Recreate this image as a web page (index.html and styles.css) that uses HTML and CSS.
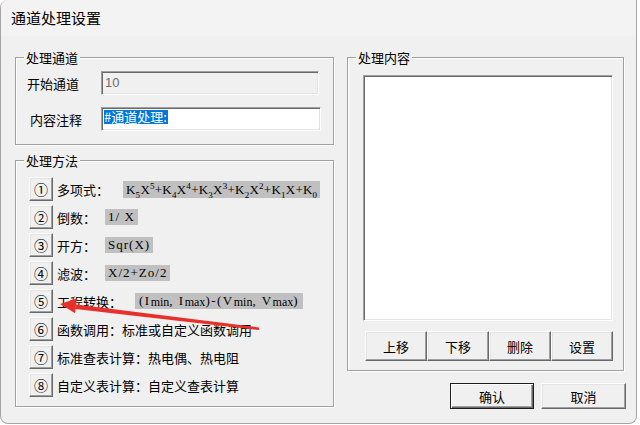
FILE: index.html
```html
<!DOCTYPE html>
<html lang="zh-CN">
<head>
    <meta charset="UTF-8">
    <meta name="viewport" content="width=device-width, initial-scale=1.0">
    <title>通道处理设置</title>
    <link rel="stylesheet" href="styles.css">
</head>
<body>
    <div class="window">
        <div class="titlebar">通道处理设置</div>
        <div class="client">
            <div class="col-left">
                <fieldset class="group group-channel">
                    <legend>处理通道</legend>
                    <div class="fields">
                        <div class="field">
                            <span class="field-label">开始通道</span>
                            <div class="edit edit-disabled">10</div>
                        </div>
                        <div class="field">
                            <span class="field-label field-label-note">内容注释</span>
                            <div class="edit edit-note"><span class="sel">#通道处理:</span></div>
                        </div>
                    </div>
                </fieldset>
                <fieldset class="group group-method">
                    <legend>处理方法</legend>
                    <ul class="methods">
                        <li class="method">
                            <button class="btn btn-num">①</button>
                            <span>多项式：</span>
                            <span class="formula formula-poly">K<sub>5</sub>X<sup>5</sup>+K<sub>4</sub>X<sup>4</sup>+K<sub>3</sub>X<sup>3</sup>+K<sub>2</sub>X<sup>2</sup>+K<sub>1</sub>X+K<sub>0</sub></span>
                        </li>
                        <li class="method">
                            <button class="btn btn-num">②</button>
                            <span>倒数：</span>
                            <span class="formula">1/ X</span>
                        </li>
                        <li class="method">
                            <button class="btn btn-num">③</button>
                            <span>开方：</span>
                            <span class="formula">Sqr(X)</span>
                        </li>
                        <li class="method">
                            <button class="btn btn-num">④</button>
                            <span>滤波：</span>
                            <span class="formula">X/2+Zo/2</span>
                        </li>
                        <li class="method">
                            <button class="btn btn-num">⑤</button>
                            <span>工程转换：</span>
                            <span class="formula formula-range">(I<sub>min</sub>, I<sub>max</sub>)-(V<sub>min</sub>, V<sub>max</sub>)</span>
                        </li>
                        <li class="method">
                            <button class="btn btn-num">⑥</button>
                            <span>函数调用：标准或自定义函数调用</span>
                        </li>
                        <li class="method">
                            <button class="btn btn-num">⑦</button>
                            <span>标准查表计算：热电偶、热电阻</span>
                        </li>
                        <li class="method">
                            <button class="btn btn-num">⑧</button>
                            <span>自定义表计算：自定义查表计算</span>
                        </li>
                    </ul>
                </fieldset>
            </div>
            <div class="col-right">
                <fieldset class="group group-content">
                    <legend>处理内容</legend>
                    <div class="content-body">
                        <div class="listbox"></div>
                        <div class="list-actions">
                            <button class="btn btn-list">上移</button>
                            <button class="btn btn-list">下移</button>
                            <button class="btn btn-list">删除</button>
                            <button class="btn btn-list">设置</button>
                        </div>
                    </div>
                </fieldset>
                <div class="dialog-actions">
                    <button class="btn btn-dialog btn-default">确认</button>
                    <button class="btn btn-dialog btn-cancel">取消</button>
                </div>
            </div>
        </div>
        <!-- red annotation arrow drawn over the method list -->
        <svg class="arrow" width="637" height="425" viewBox="0 0 637 425">
            <path d="M259,327.5 L76,304.6 L75.4,309 L259,330 Z" fill="#e8302a"/>
            <path d="M60,304 L76.7,298.6 L75.1,313.2 Z" fill="#e8302a"/>
        </svg>
    </div>
</body>
</html>
```

FILE: styles.css
```css
body {
    margin: 0;
    background: #fff;
    font: normal 13px "Noto Sans CJK SC", sans-serif;
    color: #000;
}

.window {
    position: relative;
    box-sizing: border-box;
    width: 637px;
    height: 424px;
    background: #f0f0f0;
    border: 1px solid #a5a5a5;
    border-top: 0;
    border-radius: 8px 0 8px 8px;
    overflow: hidden;
}

.titlebar {
    height: 36px;
    padding-left: 10px;
    background: #f3f3f3;
    font-size: 15px;
    line-height: 36px;
}

.client {
    display: flex;
    gap: 13px;
    padding: 14px 0 0 14px;
}

.col-left {
    display: flex;
    flex-direction: column;
    gap: 8px;
    width: 319px;
}

.col-right {
    width: 279px;
}

/* etched group frame */
.group {
    box-sizing: border-box;
    margin: 0;
    padding: 0;
    min-width: 0;
    border: 1px solid #a0a0a0;
    box-shadow: inset 1px 1px #fff, 1px 1px #fff;
}

.group legend {
    margin-left: 8px;
    padding: 0 2px;
    line-height: 15px;
    background: #f0f0f0;
}

.group-channel {
    height: 95px;
}

.fields {
    display: flex;
    flex-direction: column;
    gap: 12px;
    padding: 6px 0 0 11px;
}

.field {
    display: flex;
    align-items: center;
}

.field-label {
    width: 74px;
}

.field-label-note {
    width: 71px;
    padding-left: 3px;
}

/* sunken edit box */
.edit, .listbox {
    box-sizing: border-box;
    border: 1px solid;
    border-color: #a0a0a0 #fff #fff #a0a0a0;
    box-shadow: inset 1px 1px #696969, inset -1px -1px #e3e3e3;
    background: #fff;
}

.edit {
    width: 218px;
    height: 24px;
    padding: 1px 0 0 2px;
    font-family: "Liberation Sans", sans-serif;
    line-height: 18px;
}

.edit-disabled {
    background: #f0f0f0;
    color: #6d6d6d;
    padding-left: 3px;
    line-height: 20px;
}

.edit-note {
    width: 220px;
    padding-top: 1px;
}

.sel {
    display: inline-block;
    background: #0078d7;
    color: #fff;
    font-family: "Noto Sans CJK SC", sans-serif;
    line-height: 14px;
    padding-right: 1px;
}

.group-method {
    height: 254px;
}

.methods {
    display: flex;
    flex-direction: column;
    gap: 4px;
    margin: 0;
    padding: 9px 0 0 13px;
    list-style: none;
}

.method {
    display: flex;
    align-items: center;
    gap: 4px;
    height: 24px;
}

.formula {
    margin-left: 5px;
    padding: 0 3px;
    background: #c0c0c0;
    font-family: "Liberation Serif", serif;
    font-size: 13px;
    letter-spacing: 1px;
    line-height: 16px;
}

.formula-poly {
    margin-left: 10px;
    padding: 1px 3px 0;
    letter-spacing: 0.2px;
}

.formula-range {
    margin-left: 9px;
    padding: 0 4px;
    letter-spacing: 1.5px;
}

sub, sup {
    font-size: 9px;
    line-height: 0;
    letter-spacing: 0.3px;
}

.formula-range sub {
    font-size: 12px;
    vertical-align: -1px;
    letter-spacing: 0;
}

/* raised push button */
.btn {
    box-sizing: border-box;
    padding: 0;
    background: #f0f0f0;
    border: 1px solid;
    border-color: #fff #696969 #696969 #fff;
    box-shadow: inset -1px -1px #a0a0a0, inset 1px 1px #e3e3e3;
    font: normal 13px "Noto Sans CJK SC", sans-serif;
    color: #000;
}

.btn-num {
    width: 24px;
    height: 24px;
    font-size: 14px;
}

.group-content {
    height: 321px;
    width: 277px;
}

.content-body {
    padding: 10px 0 0 15px;
}

.listbox {
    width: 250px;
    height: 246px;
}

.list-actions {
    display: flex;
    margin: 10px 0 0 2px;
}

.btn-list {
    width: 62px;
    height: 30px;
}

.dialog-actions {
    display: flex;
    justify-content: flex-end;
    gap: 7px;
    margin-top: 12px;
}

.btn-dialog {
    width: 84px;
    height: 26px;
}

.btn-cancel {
    width: 85px;
}

.btn-default {
    border-color: #1e1e1e;
    box-shadow: inset 1px 1px #fff, inset -1px -1px #696969, inset -2px -2px #a0a0a0;
}

.arrow {
    position: absolute;
    left: -1px;
    top: 0;
    pointer-events: none;
}
```
